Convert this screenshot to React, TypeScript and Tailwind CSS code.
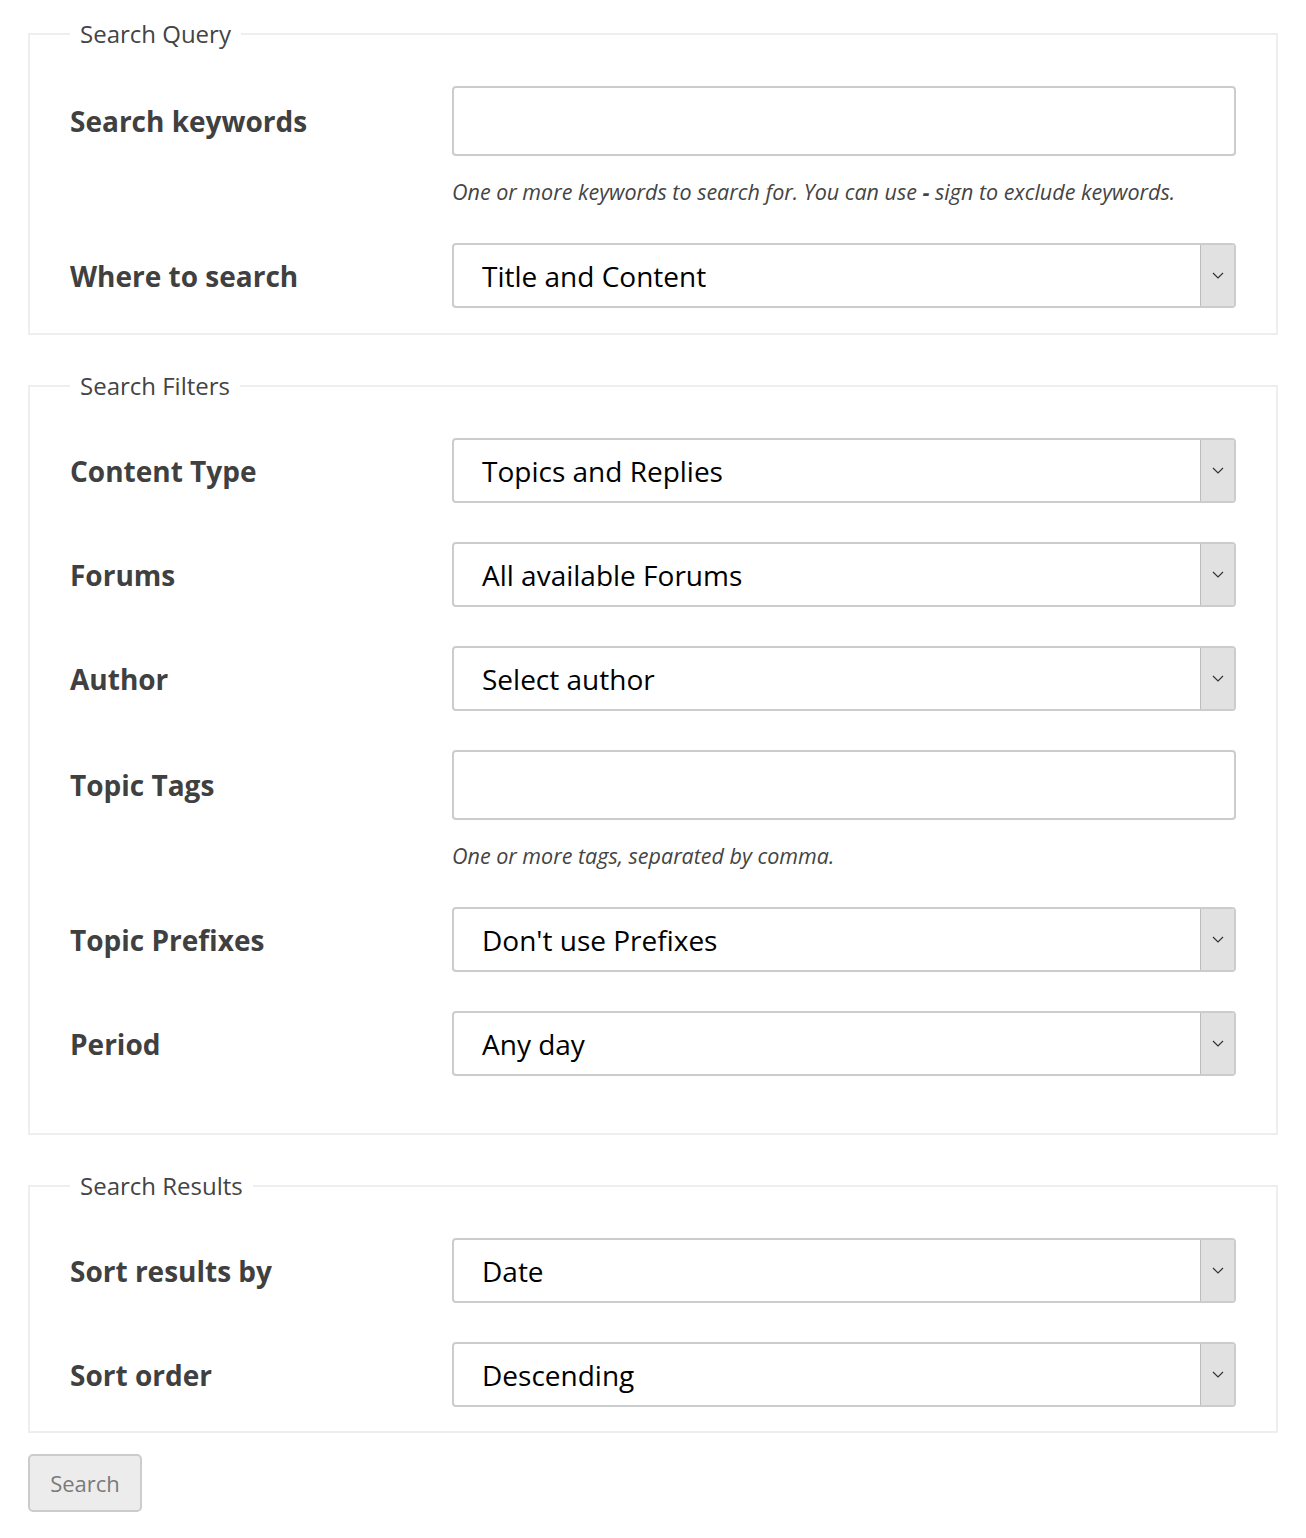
import React from "react"

const font = { fontFamily: '"Open Sans", "Noto Sans", sans-serif' }

function Label({ text, tall }: { text: string; tall?: boolean }) {
  return (
    <div
      className={`w-[382px] shrink-0 flex items-center text-[28px] font-bold text-[#404040] ${
        tall ? "h-[70px]" : "h-[65px]"
      }`}
    >
      {text}
    </div>
  )
}

function SelectBox({ value }: { value: string }) {
  return (
    <div className="flex h-[65px] w-[784px] overflow-hidden rounded-[4px] border-2 border-[#cccccc] bg-white">
      <div className="flex flex-1 items-center pl-[28px] text-[28px] text-black">{value}</div>
      <div className="flex w-[34px] items-center justify-center border-l border-[#bdbdbd] bg-[#e1e1e1]">
        <svg width="12" height="7" viewBox="0 0 12 7" fill="none">
          <path d="M1 1l5 5 5-5" stroke="#333" strokeWidth="1.2" />
        </svg>
      </div>
    </div>
  )
}

function TextBox() {
  return <div className="h-[70px] w-[784px] rounded-[4px] border-2 border-[#cccccc] bg-white" />
}

function Help({ text }: { text: React.ReactNode }) {
  return <div className="mt-[23px] text-[21.5px] italic leading-[25px] text-[#444444]">{text}</div>
}

function Row({
  label,
  children,
  tall,
}: {
  label: string
  children: React.ReactNode
  tall?: boolean
}) {
  return (
    <div className="flex items-start">
      <Label text={label} tall={tall} />
      <div className="flex flex-col">{children}</div>
    </div>
  )
}

function Group({
  title,
  children,
  pb,
}: {
  title: string
  children: React.ReactNode
  pb: string
}) {
  return (
    <fieldset className={`border-2 border-[#eeeeee] px-[40px] pt-[36px] ${pb}`}>
      <legend className="px-[10px] text-[24px] leading-[32px] text-[#444444]">{title}</legend>
      {children}
    </fieldset>
  )
}

export default function App() {
  return (
    <div className="min-h-[1538px] bg-white px-[28px] pt-[18px]" style={font}>
      <Group title="Search Query" pb="pb-[25px]">
        <div className="flex flex-col gap-[39px]">
          <Row label="Search keywords" tall>
            <TextBox />
            <Help
              text={
                <>
                  One or more keywords to search for. You can use <b className="font-bold">-</b> sign to
                  exclude keywords.
                </>
              }
            />
          </Row>
          <Row label="Where to search">
            <SelectBox value="Title and Content" />
          </Row>
        </div>
      </Group>

      <div className="h-[35px]" />
      <Group title="Search Filters" pb="pb-[57px]">
        <div className="flex flex-col gap-[39px]">
          <Row label="Content Type">
            <SelectBox value="Topics and Replies" />
          </Row>
          <Row label="Forums">
            <SelectBox value="All available Forums" />
          </Row>
          <Row label="Author">
            <SelectBox value="Select author" />
          </Row>
          <Row label="Topic Tags" tall>
            <TextBox />
            <Help text="One or more tags, separated by comma." />
          </Row>
          <Row label="Topic Prefixes">
            <SelectBox value="Don't use Prefixes" />
          </Row>
          <Row label="Period">
            <SelectBox value="Any day" />
          </Row>
        </div>
      </Group>

      <div className="h-[35px]" />
      <Group title="Search Results" pb="pb-[24px]">
        <div className="flex flex-col gap-[39px]">
          <Row label="Sort results by">
            <SelectBox value="Date" />
          </Row>
          <Row label="Sort order">
            <SelectBox value="Descending" />
          </Row>
        </div>
      </Group>

      <button className="mt-[21px] h-[58px] w-[114px] rounded-[5px] border-2 border-[#cccccc] bg-[#ececec] text-[22px] text-[#7a7a7a]">
        Search
      </button>
    </div>
  )
}
